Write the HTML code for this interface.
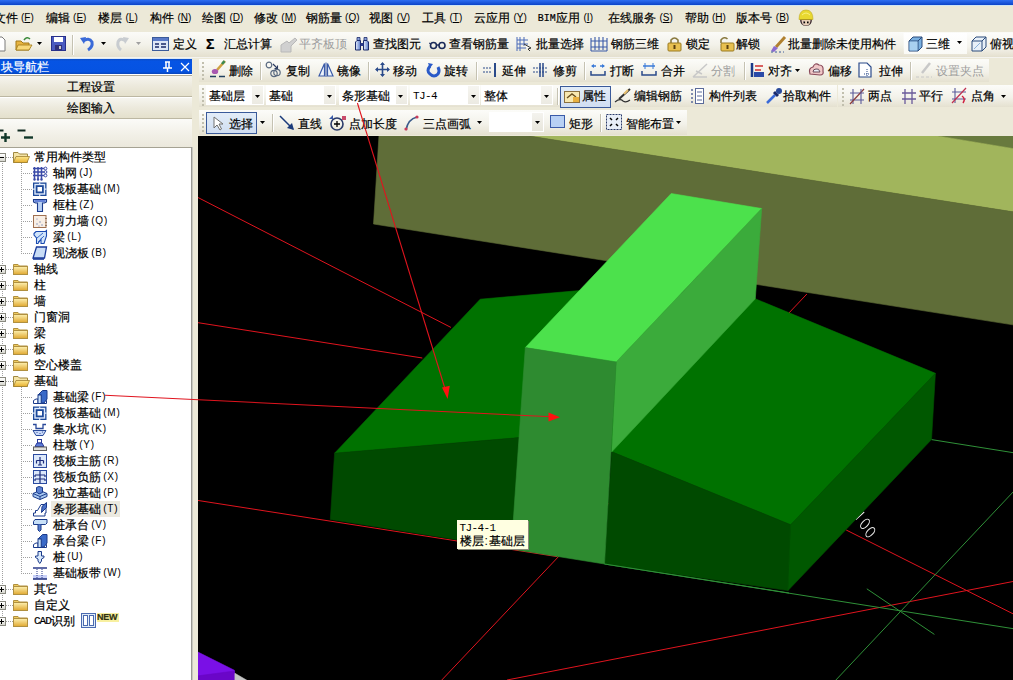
<!DOCTYPE html><html><head><meta charset="utf-8"><style>
html,body{margin:0;padding:0;width:1013px;height:680px;overflow:hidden;background:#ece9d8;}
#root{position:relative;width:1013px;height:680px;overflow:hidden;background:#ece9d8;}
.t{position:absolute;white-space:nowrap;font-family:'Liberation Sans',sans-serif;-webkit-text-stroke:0.2px currentColor;}
.p{-webkit-text-stroke:0 !important;}
.r{position:absolute;}
.m{font-family:'Liberation Mono',monospace;font-size:10px;}
svg{position:absolute;overflow:visible;}
</style></head><body><div id="root">
<div class="r" style="left:0px;top:0px;width:1013px;height:5px;background:linear-gradient(#2f6ff2,#0d44c8);"></div>
<div class="r" style="left:0px;top:5px;width:1013px;height:1px;background:#cfe6f4;"></div>
<div class="t" style="left:-6.5px;top:12px;color:#000;font-size:12px;line-height:12px;">文件</div>
<div class="t p" style="left:21.0px;top:13px;font-size:10px;line-height:10px;">(<u>F</u>)</div>
<div class="t" style="left:45.6px;top:12px;color:#000;font-size:12px;line-height:12px;">编辑</div>
<div class="t p" style="left:73.1px;top:13px;font-size:10px;line-height:10px;">(<u>E</u>)</div>
<div class="t" style="left:98px;top:12px;color:#000;font-size:12px;line-height:12px;">楼层</div>
<div class="t p" style="left:125.5px;top:13px;font-size:10px;line-height:10px;">(<u>L</u>)</div>
<div class="t" style="left:150px;top:12px;color:#000;font-size:12px;line-height:12px;">构件</div>
<div class="t p" style="left:177.5px;top:13px;font-size:10px;line-height:10px;">(<u>N</u>)</div>
<div class="t" style="left:202px;top:12px;color:#000;font-size:12px;line-height:12px;">绘图</div>
<div class="t p" style="left:229.5px;top:13px;font-size:10px;line-height:10px;">(<u>D</u>)</div>
<div class="t" style="left:253.8px;top:12px;color:#000;font-size:12px;line-height:12px;">修改</div>
<div class="t p" style="left:281.3px;top:13px;font-size:10px;line-height:10px;">(<u>M</u>)</div>
<div class="t" style="left:305.6px;top:12px;color:#000;font-size:12px;line-height:12px;">钢筋量</div>
<div class="t p" style="left:345.1px;top:13px;font-size:10px;line-height:10px;">(<u>Q</u>)</div>
<div class="t" style="left:369.3px;top:12px;color:#000;font-size:12px;line-height:12px;">视图</div>
<div class="t p" style="left:396.8px;top:13px;font-size:10px;line-height:10px;">(<u>V</u>)</div>
<div class="t" style="left:422px;top:12px;color:#000;font-size:12px;line-height:12px;">工具</div>
<div class="t p" style="left:449.5px;top:13px;font-size:10px;line-height:10px;">(<u>T</u>)</div>
<div class="t" style="left:474px;top:12px;color:#000;font-size:12px;line-height:12px;">云应用</div>
<div class="t p" style="left:513.5px;top:13px;font-size:10px;line-height:10px;">(<u>Y</u>)</div>
<div class="t" style="left:608px;top:12px;color:#000;font-size:12px;line-height:12px;">在线服务</div>
<div class="t p" style="left:659.5px;top:13px;font-size:10px;line-height:10px;">(<u>S</u>)</div>
<div class="t" style="left:684.5px;top:12px;color:#000;font-size:12px;line-height:12px;">帮助</div>
<div class="t p" style="left:712.0px;top:13px;font-size:10px;line-height:10px;">(<u>H</u>)</div>
<div class="t" style="left:736.3px;top:12px;color:#000;font-size:12px;line-height:12px;">版本号</div>
<div class="t p" style="left:775.8px;top:13px;font-size:10px;line-height:10px;">(<u>B</u>)</div>
<div class="t" style="left:537.7px;top:13px;color:#000;font-size:12px;line-height:12px;font-family:'Liberation Mono',monospace;font-size:10px;line-height:11px;">BIM</div>
<div class="t" style="left:556px;top:12px;color:#000;font-size:12px;line-height:12px;">应用</div>
<div class="t p" style="left:583.5px;top:13px;font-size:10px;line-height:10px;">(<u>I</u>)</div>
<svg style="left:798px;top:9px" width="16" height="18" viewBox="0 0 16 18"><path d="M2 10Q2 17 8 17Q14 17 14 10Z" fill="#3a2a30"/><path d="M3.5 11Q3.5 16.5 8 16.5Q12.5 16.5 12.5 11Z" fill="#e8d0b8"/><path d="M5 11Q7 13 6 16" fill="#a080c0" opacity="0.6"/><rect x="5.5" y="12.5" width="1.6" height="1.8" fill="#000"/><rect x="9" y="12.5" width="1.6" height="1.8" fill="#000"/><path d="M1 10.5Q1 1 8 1Q15 1 15 10.5Z" fill="#e8d830" stroke="#c0a818" stroke-width="0.6"/><path d="M4 6Q8 2 12 6" stroke="#f8f080" fill="none"/></svg>
<div class="r" style="left:0px;top:32px;width:1013px;height:25px;background:linear-gradient(#fbfbf8,#f3f2ea 50%,#e4e0cf);"></div>
<div class="r" style="left:0px;top:57px;width:1013px;height:1px;background:#f4f3ee;"></div>
<svg style="left:-4px;top:36px" width="10" height="16" viewBox="0 0 10 16"><path d="M0 1H6L9 4V15H0Z" fill="#fff" stroke="#7a7a7a"/></svg>
<svg style="left:15px;top:36px" width="18" height="16" viewBox="0 0 18 16"><path d="M1 5H6L8 7H14V14H1Z" fill="#e8b440" stroke="#a07818"/><path d="M3 9H17L14 14H1Z" fill="#f8d878" stroke="#a07818" stroke-width="0.8"/><path d="M9 4Q12 0 15 3" stroke="#3a8a3a" fill="none" stroke-width="1.5"/></svg>
<svg style="left:37px;top:42px" width="6" height="4" viewBox="0 0 6 4"><path d="M0 0H5L2.5 3Z" fill="#000"/></svg>
<svg style="left:51px;top:36px" width="15" height="15" viewBox="0 0 15 15"><rect x="0.5" y="0.5" width="14" height="14" fill="#4a5ac0" stroke="#28308a"/><rect x="3" y="1" width="9" height="5" fill="#fff"/><rect x="4" y="9" width="7" height="5" fill="#30307a"/><rect x="8" y="10" width="2" height="3" fill="#ccc"/></svg>
<div class="r" style="left:72px;top:35px;width:1px;height:20px;background:#c5c2b2;border-right:1px solid #fff;"></div>
<svg style="left:80px;top:36px" width="14" height="15" viewBox="0 0 14 15"><path d="M3 5Q9 1 12 6Q13 11 8 14" stroke="#3a6ad8" stroke-width="3" fill="none"/><path d="M0 2L6 1L4 8Z" fill="#3a6ad8"/></svg>
<svg style="left:101px;top:42px" width="6" height="4" viewBox="0 0 6 4"><path d="M0 0H5L2.5 3Z" fill="#000"/></svg>
<svg style="left:116px;top:36px" width="13" height="15" viewBox="0 0 13 15"><path d="M10 5Q4 1 2 6Q1 11 5 14" stroke="#c8ccd0" stroke-width="3" fill="none"/><path d="M13 2L7 1L9 8Z" fill="#c8ccd0"/></svg>
<svg style="left:136px;top:42px" width="6" height="4" viewBox="0 0 6 4"><path d="M0 0H5L2.5 3Z" fill="#a0a0a0"/></svg>
<svg style="left:152px;top:37px" width="17" height="14" viewBox="0 0 17 14"><rect x="0.5" y="0.5" width="16" height="13" fill="#dde6f6" stroke="#3a5a9a"/><rect x="1" y="1" width="15" height="3" fill="#5a7ac8"/><path d="M3 7H7M3 10H7M9 7H14M9 10H14" stroke="#1a2a6a" stroke-width="1.3"/></svg>
<div class="t" style="left:173px;top:38px;color:#000;font-size:12px;line-height:12px;">定义</div>
<div class="t" style="left:206px;top:38px;color:#000;font-size:12px;line-height:12px;font-size:14px;line-height:12px;"><b>Σ</b></div>
<div class="t" style="left:223.5px;top:38px;color:#000;font-size:12px;line-height:12px;">汇总计算</div>
<svg style="left:279px;top:37px" width="20" height="16" viewBox="0 0 20 16"><path d="M2 15V8L8 4L10 6L16 1L18 3L12 9V15Z" fill="#d0d0d0" stroke="#b8b8b8"/></svg>
<div class="t" style="left:299px;top:38px;color:#9c9c9c;font-size:12px;line-height:12px;-webkit-text-stroke:0;">平齐板顶</div>
<svg style="left:354px;top:36px" width="16" height="15" viewBox="0 0 16 15"><defs><linearGradient id="bn" x1="0" y1="0" x2="1" y2="0"><stop offset="0" stop-color="#e8f0ff"/><stop offset="1" stop-color="#5a7ac8"/></linearGradient></defs><path d="M3 1.5H6V4.5H3Z M10 1.5H13V4.5H10Z" fill="#8aa0d8" stroke="#1a2a6a" stroke-width="0.8"/><path d="M1.5 6L3 4.5H6.5V14H1.5Z" fill="url(#bn)" stroke="#1a2a6a"/><path d="M9.5 4.5H13L14.5 6V14H9.5Z" fill="url(#bn)" stroke="#1a2a6a"/><rect x="6.5" y="7" width="3" height="3" fill="#2a3a8a"/></svg>
<div class="t" style="left:373.4px;top:38px;color:#000;font-size:12px;line-height:12px;">查找图元</div>
<svg style="left:429px;top:40px" width="18" height="10" viewBox="0 0 18 10"><circle cx="4.5" cy="5.5" r="3" fill="none" stroke="#1a2a5a" stroke-width="1.6"/><circle cx="13" cy="5.5" r="3" fill="none" stroke="#1a2a5a" stroke-width="1.6"/><path d="M7.5 5H10" stroke="#1a2a5a" stroke-width="1.4"/><path d="M0 3L2 4" stroke="#1a2a5a"/></svg>
<div class="t" style="left:449px;top:38px;color:#000;font-size:12px;line-height:12px;">查看钢筋量</div>
<svg style="left:516px;top:36px" width="16" height="16" viewBox="0 0 16 16"><path d="M1 1V15M1 4H12M1 8H12M1 12H10M4 1V15M8 1V10" stroke="#4a6ab8" stroke-width="1"/><path d="M8 8L15 12L12 13L14 15" stroke="#303030" fill="#fff"/></svg>
<div class="t" style="left:536px;top:38px;color:#000;font-size:12px;line-height:12px;">批量选择</div>
<svg style="left:590px;top:36px" width="18" height="16" viewBox="0 0 18 16"><path d="M1 2V15M5 1V14M9 1V14M13 1V14M17 2V15M1 5H17M1 11H17M1 15H17" stroke="#3a5aa8" stroke-width="1.1" fill="none"/></svg>
<div class="t" style="left:610.6px;top:38px;color:#000;font-size:12px;line-height:12px;">钢筋三维</div>
<svg style="left:667px;top:36px" width="15" height="16" viewBox="0 0 15 16"><path d="M4 7V4Q7.5 0 11 4V7" stroke="#8a7a40" stroke-width="1.6" fill="none"/><rect x="1" y="7" width="13" height="8" rx="1" fill="#e8c050" stroke="#9a7a20"/><rect x="6.5" y="9" width="2" height="4" fill="#5a4010"/></svg>
<div class="t" style="left:685.7px;top:38px;color:#000;font-size:12px;line-height:12px;">锁定</div>
<svg style="left:719px;top:36px" width="16" height="16" viewBox="0 0 16 16"><path d="M2 7V4Q5 0 8.5 3" stroke="#8a7a40" stroke-width="1.6" fill="none"/><rect x="2" y="7" width="13" height="8" rx="1" fill="#e8c050" stroke="#9a7a20"/><rect x="7.5" y="9" width="2" height="4" fill="#5a4010"/></svg>
<div class="t" style="left:736px;top:38px;color:#000;font-size:12px;line-height:12px;">解锁</div>
<svg style="left:770px;top:36px" width="16" height="17" viewBox="0 0 16 17"><path d="M15 1L6 11" stroke="#b08030" stroke-width="3"/><path d="M4 10L8 12L4 16L1 15Z" fill="#8a6ad0"/><path d="M1 16H14" stroke="#3a5a9a" stroke-dasharray="2 2"/></svg>
<div class="t" style="left:787.5px;top:38px;color:#000;font-size:12px;line-height:12px;">批量删除未使用构件</div>
<div class="r" style="left:903px;top:33px;width:110px;height:23px;background:linear-gradient(#fdfdfb,#f4f3ec 60%,#e6e2d2);"></div>
<div class="r" style="left:904px;top:33px;width:63px;height:21px;background:linear-gradient(#ffffff,#fafaf6);"></div>
<svg style="left:908px;top:36px" width="15" height="16" viewBox="0 0 15 16"><path d="M1 5L5 1H14V11L10 15H1Z" fill="#7ab0e0" stroke="#2a4a7a"/><path d="M1 5H10V15M10 5L14 1" stroke="#2a4a7a" fill="none"/><rect x="1.5" y="5.5" width="8" height="9" fill="#a8d0f0"/></svg>
<div class="t" style="left:925.5px;top:38px;color:#000;font-size:12px;line-height:12px;">三维</div>
<svg style="left:957px;top:41px" width="6" height="4" viewBox="0 0 6 4"><path d="M0 0H5L2.5 3Z" fill="#000"/></svg>
<svg style="left:971px;top:36px" width="16" height="16" viewBox="0 0 16 16"><path d="M1 5L5 1H15V11L11 15H1Z" fill="#e8f0f8" stroke="#2a4a7a"/><path d="M1 5H11V15M11 5L15 1" stroke="#2a4a7a" fill="none"/><path d="M3 13L9 7" stroke="#8ab0d8"/></svg>
<div class="t" style="left:990px;top:38px;color:#000;font-size:12px;line-height:12px;">俯视</div>
<div class="r" style="left:199px;top:59px;width:790px;height:23px;background:linear-gradient(#fcfcf9,#f3f2ea 55%,#e5e1d0);"></div>
<div class="r" style="left:199px;top:85px;width:638px;height:22px;background:linear-gradient(#fcfcf9,#f3f2ea 55%,#e5e1d0);"></div>
<div class="r" style="left:838px;top:85px;width:175px;height:22px;background:linear-gradient(#fcfcf9,#f3f2ea 55%,#e5e1d0);"></div>
<div class="r" style="left:199px;top:110px;width:488px;height:25px;background:linear-gradient(#fcfcf9,#f3f2ea 55%,#e5e1d0);"></div>
<div class="r" style="left:202px;top:62px;width:2px;height:2px;background:#c1bfae;"></div>
<div class="r" style="left:202px;top:66px;width:2px;height:2px;background:#c1bfae;"></div>
<div class="r" style="left:202px;top:70px;width:2px;height:2px;background:#c1bfae;"></div>
<div class="r" style="left:202px;top:74px;width:2px;height:2px;background:#c1bfae;"></div>
<div class="r" style="left:202px;top:78px;width:2px;height:2px;background:#c1bfae;"></div>
<div class="r" style="left:202px;top:88px;width:2px;height:2px;background:#c1bfae;"></div>
<div class="r" style="left:202px;top:92px;width:2px;height:2px;background:#c1bfae;"></div>
<div class="r" style="left:202px;top:96px;width:2px;height:2px;background:#c1bfae;"></div>
<div class="r" style="left:202px;top:100px;width:2px;height:2px;background:#c1bfae;"></div>
<div class="r" style="left:202px;top:104px;width:2px;height:2px;background:#c1bfae;"></div>
<div class="r" style="left:202px;top:114px;width:2px;height:2px;background:#c1bfae;"></div>
<div class="r" style="left:202px;top:118px;width:2px;height:2px;background:#c1bfae;"></div>
<div class="r" style="left:202px;top:122px;width:2px;height:2px;background:#c1bfae;"></div>
<div class="r" style="left:202px;top:126px;width:2px;height:2px;background:#c1bfae;"></div>
<div class="r" style="left:202px;top:130px;width:2px;height:2px;background:#c1bfae;"></div>
<div class="r" style="left:842px;top:88px;width:2px;height:2px;background:#c1bfae;"></div>
<div class="r" style="left:842px;top:92px;width:2px;height:2px;background:#c1bfae;"></div>
<div class="r" style="left:842px;top:96px;width:2px;height:2px;background:#c1bfae;"></div>
<div class="r" style="left:842px;top:100px;width:2px;height:2px;background:#c1bfae;"></div>
<div class="r" style="left:842px;top:104px;width:2px;height:2px;background:#c1bfae;"></div>
<svg style="left:209px;top:60px" width="17" height="18" viewBox="0 0 17 18"><path d="M16 1L8 10" stroke="#d0a040" stroke-width="2.6"/><path d="M15.5 1.2L13 4" stroke="#3a8a50" stroke-width="2.6"/><ellipse cx="6" cy="11.5" rx="3.2" ry="2.6" fill="#a858b0"/><path d="M1 16.5H7M10 16.5H16" stroke="#204060" stroke-width="1.6"/></svg>
<div class="t" style="left:228.8px;top:65px;color:#000;font-size:12px;line-height:12px;">删除</div>
<div class="r" style="left:260px;top:62px;width:1px;height:18px;background:#c5c2b2;border-right:1px solid #fff;"></div>
<svg style="left:265px;top:61px" width="18" height="17" viewBox="0 0 18 17"><circle cx="4" cy="4" r="2.8" fill="none" stroke="#5a6a80" stroke-width="1.2"/><path d="M8 3L12.5 7.5M12.5 4.5V7.5H9.5" stroke="#2a3a60" fill="none" stroke-width="1.1"/><circle cx="9" cy="12.5" r="3.2" fill="none" stroke="#5a6a80" stroke-width="1.2"/><circle cx="12" cy="11.5" r="3.2" fill="none" stroke="#5a6a80" stroke-width="1.2"/></svg>
<div class="t" style="left:285.6px;top:65px;color:#000;font-size:12px;line-height:12px;">复制</div>
<svg style="left:318px;top:62px" width="16" height="15" viewBox="0 0 16 15"><path d="M1 14L6.5 1.5V14Z" fill="#eef4fc" stroke="#3a5aa8" stroke-width="1.2"/><path d="M15 14L9.5 1.5V14Z" fill="#eef4fc" stroke="#3a5aa8" stroke-width="1.2"/><path d="M8 0.5V15" stroke="#3a5aa8"/></svg>
<div class="t" style="left:337px;top:65px;color:#000;font-size:12px;line-height:12px;">镜像</div>
<div class="r" style="left:368px;top:62px;width:1px;height:18px;background:#c5c2b2;border-right:1px solid #fff;"></div>
<svg style="left:375px;top:62px" width="15" height="15" viewBox="0 0 15 15"><path d="M7.5 1V14M1 7.5H14" stroke="#2a4a8a" stroke-width="1.6"/><path d="M7.5 0L5 3H10ZM7.5 15L5 12H10ZM0 7.5L3 5V10ZM15 7.5L12 5V10Z" fill="#2a4a8a"/></svg>
<div class="t" style="left:393px;top:65px;color:#000;font-size:12px;line-height:12px;">移动</div>
<svg style="left:427px;top:62px" width="13" height="15" viewBox="0 0 13 15"><path d="M3 4Q-1 9 3 12Q7 16 11 12Q13 9 11 5" stroke="#2a5ac8" stroke-width="3" fill="none"/><path d="M1 1L6 2L3 6Z" fill="#2a5ac8"/></svg>
<div class="t" style="left:444px;top:65px;color:#000;font-size:12px;line-height:12px;">旋转</div>
<div class="r" style="left:476px;top:62px;width:1px;height:18px;background:#c5c2b2;border-right:1px solid #fff;"></div>
<svg style="left:483px;top:63px" width="14" height="14" viewBox="0 0 14 14"><path d="M12 0V14" stroke="#2a4a8a" stroke-width="2"/><path d="M0 5H9M0 9H9" stroke="#2a4a8a" stroke-dasharray="2 1"/></svg>
<div class="t" style="left:501.5px;top:65px;color:#000;font-size:12px;line-height:12px;">延伸</div>
<svg style="left:533px;top:63px" width="15" height="14" viewBox="0 0 15 14"><path d="M7 0V14M10 0V14" stroke="#2a4a8a" stroke-width="1.5"/><path d="M0 5H15M0 9H15" stroke="#2a4a8a" stroke-dasharray="2 1"/></svg>
<div class="t" style="left:553px;top:65px;color:#000;font-size:12px;line-height:12px;">修剪</div>
<div class="r" style="left:584px;top:62px;width:1px;height:18px;background:#c5c2b2;border-right:1px solid #fff;"></div>
<svg style="left:590px;top:62px" width="16" height="15" viewBox="0 0 16 15"><path d="M1 9V13H15V9" stroke="#2a4a8a" stroke-width="1.5" fill="none"/><path d="M2 4H6M10 4H14" stroke="#3a7ad8" stroke-width="1.5"/><path d="M1 4L4 2V6ZM15 4L12 2V6Z" fill="#3a7ad8"/></svg>
<div class="t" style="left:609.7px;top:65px;color:#000;font-size:12px;line-height:12px;">打断</div>
<svg style="left:641px;top:62px" width="16" height="15" viewBox="0 0 16 15"><path d="M1 9V13H15V9" stroke="#2a4a8a" stroke-width="1.5" fill="none"/><path d="M2 4H14" stroke="#3a7ad8" stroke-width="1.5"/><path d="M4 1V7M12 1V7" stroke="#3a7ad8"/></svg>
<div class="t" style="left:661px;top:65px;color:#000;font-size:12px;line-height:12px;">合并</div>
<svg style="left:692px;top:62px" width="16" height="16" viewBox="0 0 16 16"><path d="M1 15L15 2M1 15H15M4 9L10 12" stroke="#c8c8c8" stroke-width="1.5"/></svg>
<div class="t" style="left:710.5px;top:65px;color:#9c9c9c;font-size:12px;line-height:12px;-webkit-text-stroke:0;">分割</div>
<div class="r" style="left:744px;top:62px;width:1px;height:18px;background:#c5c2b2;border-right:1px solid #fff;"></div>
<svg style="left:750px;top:62px" width="15" height="16" viewBox="0 0 15 16"><path d="M2 1V15" stroke="#1a3a8a" stroke-width="2.5"/><path d="M5 4H13M5 8H11M5 12H14" stroke="#d03030" stroke-width="1.4"/><rect x="4" y="10" width="10" height="5" fill="#2a4aa8"/></svg>
<div class="t" style="left:768.3px;top:65px;color:#000;font-size:12px;line-height:12px;">对齐</div>
<svg style="left:795px;top:69px" width="6" height="4" viewBox="0 0 6 4"><path d="M0 0H5L2.5 3Z" fill="#000"/></svg>
<svg style="left:808px;top:62px" width="17" height="15" viewBox="0 0 17 15"><path d="M2 12Q0 6 5 5Q7 0 11 3Q16 3 15 9Q16 13 12 13Z" fill="#f0c8c8" stroke="#8a4a5a" stroke-width="1.2"/><path d="M5 10Q5 7 8 7Q11 6 12 10Z" fill="#e8f0f8" stroke="#6a4a5a"/></svg>
<div class="t" style="left:827.6px;top:65px;color:#000;font-size:12px;line-height:12px;">偏移</div>
<svg style="left:858px;top:62px" width="15" height="16" viewBox="0 0 15 16"><path d="M1 1H9L13 5V15H1Z" fill="#fff" stroke="#2a4a8a" stroke-width="1.2"/><path d="M9 7V14M6 12H12" stroke="#2a4a8a" stroke-dasharray="1 1"/></svg>
<div class="t" style="left:878.8px;top:65px;color:#000;font-size:12px;line-height:12px;">拉伸</div>
<div class="r" style="left:910px;top:62px;width:1px;height:18px;background:#c5c2b2;border-right:1px solid #fff;"></div>
<svg style="left:915px;top:62px" width="18" height="16" viewBox="0 0 18 16"><path d="M15 1L7 11" stroke="#c8c8c8" stroke-width="2.5"/><path d="M1 15H17" stroke="#c8c8c8" stroke-dasharray="3 2"/></svg>
<div class="t" style="left:936px;top:65px;color:#9c9c9c;font-size:12px;line-height:12px;-webkit-text-stroke:0;">设置夹点</div>
<div class="r" style="left:206px;top:85px;width:58px;height:20px;background:#fff;"></div>
<div class="r" style="left:252px;top:86px;width:11px;height:18px;background:linear-gradient(#f6f5f0,#eceae2);"></div>
<svg style="left:254.5px;top:94.5px" width="6" height="4" viewBox="0 0 6 4"><path d="M0 0H5L2.5 3Z" fill="#000"/></svg>
<div class="t" style="left:209px;top:90px;color:#000;font-size:12px;line-height:12px;">基础层</div>
<div class="r" style="left:266px;top:85px;width:70px;height:20px;background:#fff;"></div>
<div class="r" style="left:324px;top:86px;width:11px;height:18px;background:linear-gradient(#f6f5f0,#eceae2);"></div>
<svg style="left:326.5px;top:94.5px" width="6" height="4" viewBox="0 0 6 4"><path d="M0 0H5L2.5 3Z" fill="#000"/></svg>
<div class="t" style="left:269px;top:90px;color:#000;font-size:12px;line-height:12px;">基础</div>
<div class="r" style="left:338.5px;top:85px;width:69px;height:20px;background:#fff;"></div>
<div class="r" style="left:395.5px;top:86px;width:11px;height:18px;background:linear-gradient(#f6f5f0,#eceae2);"></div>
<svg style="left:398.0px;top:94.5px" width="6" height="4" viewBox="0 0 6 4"><path d="M0 0H5L2.5 3Z" fill="#000"/></svg>
<div class="t" style="left:341.5px;top:90px;color:#000;font-size:12px;line-height:12px;">条形基础</div>
<div class="r" style="left:410px;top:85px;width:70px;height:20px;background:#fff;"></div>
<div class="r" style="left:468px;top:86px;width:11px;height:18px;background:linear-gradient(#f6f5f0,#eceae2);"></div>
<svg style="left:470.5px;top:94.5px" width="6" height="4" viewBox="0 0 6 4"><path d="M0 0H5L2.5 3Z" fill="#000"/></svg>
<div class="t p" style="left:413px;top:90px;font-family:'Liberation Mono',monospace;font-size:11px;line-height:12px;letter-spacing:-0.6px;">TJ-4</div>
<div class="r" style="left:481px;top:85px;width:72px;height:20px;background:#fff;"></div>
<div class="r" style="left:541px;top:86px;width:11px;height:18px;background:linear-gradient(#f6f5f0,#eceae2);"></div>
<svg style="left:543.5px;top:94.5px" width="6" height="4" viewBox="0 0 6 4"><path d="M0 0H5L2.5 3Z" fill="#000"/></svg>
<div class="t" style="left:484px;top:90px;color:#000;font-size:12px;line-height:12px;">整体</div>
<div class="r" style="left:557px;top:88px;width:1px;height:17px;background:#c5c2b2;border-right:1px solid #fff;"></div>
<div class="r" style="left:560px;top:86px;width:51px;height:22px;background:linear-gradient(#e2ecf8,#d0def2);border:1px solid #3a5a9a;box-sizing:border-box;"></div>
<svg style="left:564px;top:89px" width="17" height="15" viewBox="0 0 17 15"><rect x="0.5" y="2.5" width="15" height="11" fill="#f8e8b0" stroke="#8a7040"/><path d="M3 9L8 5L12 8" stroke="#6a5020" fill="none" stroke-width="1.4"/><rect x="9" y="8" width="6" height="5" fill="#e8b040"/></svg>
<div class="t" style="left:582.2px;top:90px;color:#000;font-size:12px;line-height:12px;">属性</div>
<svg style="left:614px;top:88px" width="17" height="16" viewBox="0 0 17 16"><path d="M16 1L5 11" stroke="#303030" stroke-width="2"/><path d="M14 2L10 6" stroke="#e8c070" stroke-width="2"/><path d="M1 14Q6 10 9 13Q12 15 16 12" stroke="#303030" fill="none" stroke-width="1.2"/></svg>
<div class="t" style="left:633.8px;top:90px;color:#000;font-size:12px;line-height:12px;">编辑钢筋</div>
<svg style="left:690px;top:88px" width="14" height="16" viewBox="0 0 14 16"><path d="M1 2H3M1 6H3M1 10H3M1 14H3" stroke="#5a6a9a" stroke-width="1.5"/><rect x="5.5" y="0.5" width="8" height="15" fill="#fff" stroke="#5a6a9a"/><path d="M7 4H12M7 8H12M7 12H12" stroke="#5a6a9a"/></svg>
<div class="t" style="left:709px;top:90px;color:#000;font-size:12px;line-height:12px;">构件列表</div>
<svg style="left:765px;top:87px" width="18" height="18" viewBox="0 0 18 18"><path d="M2 16L10 8" stroke="#3a6ad8" stroke-width="2.5"/><path d="M9 5L13 9" stroke="#1a2a6a" stroke-width="3"/><circle cx="14" cy="4" r="3" fill="#2a4a9a"/></svg>
<div class="t" style="left:783px;top:90px;color:#000;font-size:12px;line-height:12px;">拾取构件</div>
<svg style="left:849px;top:88px" width="16" height="17" viewBox="0 0 16 17"><path d="M4 1V16M1 5H15M1 12H15" stroke="#5a5a9a" stroke-width="1.1"/><path d="M1 16L15 1" stroke="#8a3a3a" stroke-width="1.2"/><path d="M12 1V16" stroke="#5a5a9a" stroke-width="1.1"/></svg>
<div class="t" style="left:868px;top:90px;color:#000;font-size:12px;line-height:12px;">两点</div>
<svg style="left:901px;top:88px" width="15" height="16" viewBox="0 0 15 16"><path d="M4 1V16M11 1V16M1 5H15M1 11H15" stroke="#6a5a9a" stroke-width="1.3"/></svg>
<div class="t" style="left:919px;top:90px;color:#000;font-size:12px;line-height:12px;">平行</div>
<svg style="left:951px;top:87px" width="17" height="18" viewBox="0 0 17 18"><path d="M4 1V16M1 5H15M1 12H15" stroke="#5a5a9a" stroke-width="1.1"/><path d="M1 16L15 1" stroke="#c03050" stroke-width="1.2"/><path d="M11 9Q15 12 12 16" stroke="#d02040" fill="none" stroke-width="1.5"/></svg>
<div class="t" style="left:970.5px;top:90px;color:#000;font-size:12px;line-height:12px;">点角</div>
<svg style="left:1001px;top:95px" width="6" height="4" viewBox="0 0 6 4"><path d="M0 0H5L2.5 3Z" fill="#000"/></svg>
<div class="r" style="left:206px;top:112px;width:51px;height:22px;background:linear-gradient(#e2ecf8,#d0def2);border:1px solid #3a5a9a;box-sizing:border-box;"></div>
<svg style="left:213px;top:116px" width="11" height="15" viewBox="0 0 11 15"><path d="M1 1V12L4 9L7 14L8.5 13L6 8H10Z" fill="#fff" stroke="#707070"/></svg>
<div class="t" style="left:228.8px;top:118px;color:#000;font-size:12px;line-height:12px;">选择</div>
<svg style="left:259.5px;top:121px" width="6" height="4" viewBox="0 0 6 4"><path d="M0 0H5L2.5 3Z" fill="#000"/></svg>
<div class="r" style="left:272px;top:114px;width:1px;height:18px;background:#c5c2b2;border-right:1px solid #fff;"></div>
<svg style="left:279px;top:115px" width="16" height="16" viewBox="0 0 16 16"><path d="M1 1L14 14" stroke="#1a3a7a" stroke-width="1.5"/><path d="M15 15L8 13L13 8Z" fill="#1a3a7a"/></svg>
<div class="t" style="left:297.7px;top:118px;color:#000;font-size:12px;line-height:12px;">直线</div>
<svg style="left:328px;top:114px" width="19" height="18" viewBox="0 0 19 18"><circle cx="9" cy="10" r="6" fill="none" stroke="#2a3a6a" stroke-width="1.6"/><path d="M6 10H12M9 7V13" stroke="#000" stroke-width="1.3"/><path d="M1 5L5 1V5Z" fill="#3a5aa8"/><rect x="14" y="2" width="4" height="4" fill="#c84a6a"/></svg>
<div class="t" style="left:349px;top:118px;color:#000;font-size:12px;line-height:12px;">点加长度</div>
<svg style="left:404px;top:115px" width="15" height="16" viewBox="0 0 15 16"><path d="M2 15Q4 4 13 2" stroke="#3a5a8a" stroke-width="1.6" fill="none"/><circle cx="2" cy="14" r="1.6" fill="#c83a5a"/><circle cx="13" cy="2" r="1.6" fill="#c83a5a"/></svg>
<div class="t" style="left:422.8px;top:118px;color:#000;font-size:12px;line-height:12px;">三点画弧</div>
<svg style="left:476.5px;top:121px" width="6" height="4" viewBox="0 0 6 4"><path d="M0 0H5L2.5 3Z" fill="#000"/></svg>
<div class="r" style="left:489px;top:112px;width:55px;height:20px;background:#fff;"></div>
<div class="r" style="left:532px;top:113px;width:11px;height:18px;background:linear-gradient(#f4f3ee,#e8e6dc);"></div>
<svg style="left:535px;top:121px" width="6" height="4" viewBox="0 0 6 4"><path d="M0 0H5L2.5 3Z" fill="#000"/></svg>
<svg style="left:550px;top:115px" width="15" height="13" viewBox="0 0 15 13"><rect x="0.5" y="0.5" width="14" height="12" fill="#b8d0f4" stroke="#3a5aa8"/></svg>
<div class="t" style="left:568.9px;top:118px;color:#000;font-size:12px;line-height:12px;">矩形</div>
<div class="r" style="left:600px;top:114px;width:1px;height:18px;background:#c5c2b2;border-right:1px solid #fff;"></div>
<svg style="left:606px;top:114px" width="16" height="16" viewBox="0 0 16 16"><rect x="0.5" y="0.5" width="15" height="15" fill="#e8eef8" stroke="#2a3a6a" stroke-dasharray="2 1"/><path d="M4 4L6 6M12 4L10 6M4 12L6 10M12 12L10 10" stroke="#000" stroke-width="1.5"/></svg>
<div class="t" style="left:625.7px;top:118px;color:#000;font-size:12px;line-height:12px;">智能布置</div>
<svg style="left:675.6px;top:121px" width="6" height="4" viewBox="0 0 6 4"><path d="M0 0H5L2.5 3Z" fill="#000"/></svg>
<div class="r" style="left:0px;top:58px;width:194px;height:1px;background:#dbe8f4;"></div>
<div class="r" style="left:0px;top:59px;width:194px;height:15px;background:linear-gradient(#0a4cc8,#0654e4 15%,#0553e2 85%,#0844b8);"></div>
<div class="t" style="left:1px;top:61px;color:#fff;font-size:12px;line-height:12px;line-height:12px;">块导航栏</div>
<svg style="left:162px;top:61px" width="11" height="12" viewBox="0 0 11 12"><path d="M3 1H8M4 1V7M7 1V7M1 7H10M5.5 7V11" stroke="#fff" stroke-width="1.5" fill="none"/></svg>
<svg style="left:180px;top:62px" width="10" height="10" viewBox="0 0 10 10"><path d="M1 1L9 9M9 1L1 9" stroke="#fff" stroke-width="1.2"/></svg>
<div class="r" style="left:0px;top:74px;width:193px;height:1px;background:#fff;"></div>
<div class="r" style="left:0px;top:75px;width:193px;height:1px;background:#b0aa98;"></div>
<div class="r" style="left:0px;top:76px;width:192px;height:21px;background:linear-gradient(#f6f5ef,#ece9dc 50%,#e4e0cc);border-bottom:1px solid #bcb7a2;box-sizing:border-box;"></div>
<div class="r" style="left:0px;top:97px;width:192px;height:22px;background:linear-gradient(#f6f5ef,#ece9dc 50%,#e4e0cc);border-top:1px solid #fff;border-bottom:1px solid #bcb7a2;box-sizing:border-box;"></div>
<div class="t" style="left:67px;top:81px;color:#000;font-size:12px;line-height:12px;">工程设置</div>
<div class="t" style="left:67px;top:102px;color:#000;font-size:12px;line-height:12px;">绘图输入</div>
<div class="r" style="left:192px;top:76px;width:1px;height:43px;background:#cdc8b4;"></div>
<div class="r" style="left:0px;top:119px;width:192px;height:28px;background:linear-gradient(#fbfbf8,#f1efe6 60%,#ebe8dc);"></div>
<svg style="left:0;top:126px" width="40" height="18" viewBox="0 126 40 18"><path d="M-1 130.5H3.5" stroke="#102a20" stroke-width="2"/><path d="M1 137.5H10M5.5 133V142" stroke="#12382a" stroke-width="2.4"/><path d="M17.5 130.5H25.5" stroke="#102a20" stroke-width="2"/><path d="M24 137.5H33" stroke="#12382a" stroke-width="2.4"/></svg>
<div class="r" style="left:0px;top:147px;width:192px;height:533px;background:#fff;border-top:1px solid #a5a293;border-right:1px solid #a5a293;box-sizing:border-box;"></div>
<div class="r" style="left:192px;top:58px;width:6px;height:622px;background:#ece9d8;"></div>
<div class="r" style="left:191px;top:147px;width:1px;height:533px;background:#9a9a94;"></div>
<div class="r" style="left:192px;top:147px;width:1px;height:533px;background:#c9c8c0;"></div>
<svg style="left:0;top:0" width="0" height="0"><defs><linearGradient id="fg" x1="0" y1="0" x2="0" y2="1"><stop offset="0" stop-color="#fdf0b0"/><stop offset="1" stop-color="#e0a830"/></linearGradient><linearGradient id="fo" x1="0" y1="0" x2="0" y2="1"><stop offset="0" stop-color="#fce890"/><stop offset="1" stop-color="#e8b030"/></linearGradient></defs></svg>
<svg style="left:2px;top:157px" width="1" height="464"><line x1="0.5" y1="0" x2="0.5" y2="464" stroke="#a0a0a0" stroke-dasharray="1 1"/></svg>
<div class="r" style="left:-3px;top:153px;width:9px;height:9px;background:linear-gradient(#fff,#d8d8d0);border:1px solid #8a8a80;box-sizing:border-box;"></div>
<div class="r" style="left:-1px;top:157px;width:5px;height:1px;background:#000;"></div>
<svg style="left:6px;top:157px" width="7" height="1"><line x1="0" y1="0.5" x2="7" y2="0.5" stroke="#a0a0a0" stroke-dasharray="1 1"/></svg>
<svg style="left:13px;top:151px" width="17" height="12" viewBox="0 0 17 12"><path d="M0.5 1.5H5L6.5 3H14.5V11.5H0.5Z" fill="#f4e4a8" stroke="#a08840"/><path d="M3 5.5H16.5L14 11.5H0.5Z" fill="url(#fo)" stroke="#a08030" stroke-width="0.8"/></svg>
<div class="t" style="left:34.4px;top:151px;color:#000;font-size:12px;line-height:12px;">常用构件类型</div>
<svg style="left:21px;top:163px" width="1" height="90"><line x1="0.5" y1="0" x2="0.5" y2="90" stroke="#a0a0a0" stroke-dasharray="1 1"/></svg>
<svg style="left:21px;top:173px" width="11" height="1"><line x1="0" y1="0.5" x2="11" y2="0.5" stroke="#a0a0a0" stroke-dasharray="1 1"/></svg>
<svg style="left:32px;top:166px" width="16" height="16" viewBox="0 0 16 16"><path d="M2.5 1V13M6 1V13M9.5 1V13M1 2.5H12M1 6H12M1 9.5H12" stroke="#3a4aa8" stroke-width="1.5"/><circle cx="13.5" cy="2.5" r="1.4" fill="#fff" stroke="#3a4aa8"/><circle cx="13.5" cy="6" r="1.4" fill="#fff" stroke="#3a4aa8"/><circle cx="13.5" cy="9.5" r="1.4" fill="#fff" stroke="#3a4aa8"/><circle cx="2.5" cy="13.5" r="1.2" fill="#3a4aa8"/><circle cx="6" cy="13.5" r="1.2" fill="#3a4aa8"/><circle cx="9.5" cy="13.5" r="1.2" fill="#3a4aa8"/></svg>
<div class="t" style="left:52.7px;top:167px;color:#000;font-size:12px;line-height:12px;">轴网</div>
<div class="t p" style="left:79.2px;top:168px;font-size:10px;line-height:10px;letter-spacing:0.8px;">(J)</div>
<svg style="left:21px;top:189px" width="11" height="1"><line x1="0" y1="0.5" x2="11" y2="0.5" stroke="#a0a0a0" stroke-dasharray="1 1"/></svg>
<svg style="left:32px;top:182px" width="16" height="16" viewBox="0 0 16 16"><rect x="1" y="0.5" width="13.5" height="13.5" fill="#1e4a9a"/><rect x="3" y="2.5" width="9.5" height="9.5" fill="none" stroke="#e0ecfc" stroke-width="1.4"/><rect x="5.5" y="5" width="4.5" height="4.5" fill="#fff"/><path d="M1 7.2H3M12.5 7.2H14.5M7.7 0.5V2.5M7.7 12V14" stroke="#e0ecfc" stroke-width="1.2"/></svg>
<div class="t" style="left:52.7px;top:183px;color:#000;font-size:12px;line-height:12px;">筏板基础</div>
<div class="t p" style="left:103.2px;top:184px;font-size:10px;line-height:10px;letter-spacing:0.8px;">(M)</div>
<svg style="left:21px;top:205px" width="11" height="1"><line x1="0" y1="0.5" x2="11" y2="0.5" stroke="#a0a0a0" stroke-dasharray="1 1"/></svg>
<svg style="left:32px;top:198px" width="16" height="16" viewBox="0 0 16 16"><path d="M1.5 1.5H14.5V4L12.5 5H10.5V13.5H5.5V5H3.5L1.5 4Z" fill="#b8d0f4" stroke="#1a3a8a" stroke-width="1.1"/><path d="M2.5 3H13.5" stroke="#4a6ad0" stroke-width="1.5"/></svg>
<div class="t" style="left:52.7px;top:199px;color:#000;font-size:12px;line-height:12px;">框柱</div>
<div class="t p" style="left:79.2px;top:200px;font-size:10px;line-height:10px;letter-spacing:0.8px;">(Z)</div>
<svg style="left:21px;top:221px" width="11" height="1"><line x1="0" y1="0.5" x2="11" y2="0.5" stroke="#a0a0a0" stroke-dasharray="1 1"/></svg>
<svg style="left:32px;top:214px" width="16" height="16" viewBox="0 0 16 16"><rect x="1.5" y="1.5" width="12.5" height="12" fill="#f8eee4" stroke="#a07050"/><path d="M14 4V5M14 8V9M14 11V12" stroke="#806040" stroke-width="1.5"/><circle cx="5" cy="5" r="0.6" fill="#7080b0"/><circle cx="8" cy="8" r="0.7" fill="#7080b0"/><circle cx="5" cy="10" r="0.7" fill="#7080b0"/><circle cx="10" cy="11" r="0.7" fill="#7080b0"/><circle cx="7" cy="12" r="0.6" fill="#7080b0"/></svg>
<div class="t" style="left:52.7px;top:215px;color:#000;font-size:12px;line-height:12px;">剪力墙</div>
<div class="t p" style="left:91.2px;top:216px;font-size:10px;line-height:10px;letter-spacing:0.8px;">(Q)</div>
<svg style="left:21px;top:237px" width="11" height="1"><line x1="0" y1="0.5" x2="11" y2="0.5" stroke="#a0a0a0" stroke-dasharray="1 1"/></svg>
<svg style="left:32px;top:230px" width="16" height="16" viewBox="0 0 16 16"><path d="M2 3.5L4 1.5H13.5L14.5 0.5V6L12 13.5H9L9 9L6 13.5H4.5V8L2 5Z" fill="#d0e4fa" stroke="#1a4ab0" stroke-width="1.1"/><path d="M5 8L11 3M6 12L12 6" stroke="#3a6ac8" stroke-width="1"/></svg>
<div class="t" style="left:52.7px;top:231px;color:#000;font-size:12px;line-height:12px;">梁</div>
<div class="t p" style="left:67.2px;top:232px;font-size:10px;line-height:10px;letter-spacing:0.8px;">(L)</div>
<svg style="left:21px;top:253px" width="11" height="1"><line x1="0" y1="0.5" x2="11" y2="0.5" stroke="#a0a0a0" stroke-dasharray="1 1"/></svg>
<svg style="left:32px;top:246px" width="16" height="16" viewBox="0 0 16 16"><path d="M4.5 1H14.5L12.5 12H1Z" fill="#c8dcf6" stroke="#1a3a9a" stroke-width="1.3"/><path d="M1 13H12" stroke="#1a3a9a" stroke-width="1.6"/></svg>
<div class="t" style="left:52.7px;top:247px;color:#000;font-size:12px;line-height:12px;">现浇板</div>
<div class="t p" style="left:91.2px;top:248px;font-size:10px;line-height:10px;letter-spacing:0.8px;">(B)</div>
<div class="r" style="left:-3px;top:265px;width:9px;height:9px;background:linear-gradient(#fff,#d8d8d0);border:1px solid #8a8a80;box-sizing:border-box;"></div>
<div class="r" style="left:-1px;top:269px;width:5px;height:1px;background:#000;"></div>
<div class="r" style="left:1px;top:267px;width:1px;height:5px;background:#000;"></div>
<svg style="left:6px;top:269px" width="7" height="1"><line x1="0" y1="0.5" x2="7" y2="0.5" stroke="#a0a0a0" stroke-dasharray="1 1"/></svg>
<svg style="left:13px;top:263px" width="16" height="12" viewBox="0 0 16 12"><path d="M0.5 1.5H5L6.5 3H14.5V11.5H0.5Z" fill="#f0cc60" stroke="#b09040"/><rect x="0.5" y="3.5" width="14" height="8" fill="url(#fg)" stroke="#b09040"/></svg>
<div class="t" style="left:34.4px;top:263px;color:#000;font-size:12px;line-height:12px;">轴线</div>
<div class="r" style="left:-3px;top:281px;width:9px;height:9px;background:linear-gradient(#fff,#d8d8d0);border:1px solid #8a8a80;box-sizing:border-box;"></div>
<div class="r" style="left:-1px;top:285px;width:5px;height:1px;background:#000;"></div>
<div class="r" style="left:1px;top:283px;width:1px;height:5px;background:#000;"></div>
<svg style="left:6px;top:285px" width="7" height="1"><line x1="0" y1="0.5" x2="7" y2="0.5" stroke="#a0a0a0" stroke-dasharray="1 1"/></svg>
<svg style="left:13px;top:279px" width="16" height="12" viewBox="0 0 16 12"><path d="M0.5 1.5H5L6.5 3H14.5V11.5H0.5Z" fill="#f0cc60" stroke="#b09040"/><rect x="0.5" y="3.5" width="14" height="8" fill="url(#fg)" stroke="#b09040"/></svg>
<div class="t" style="left:34.4px;top:279px;color:#000;font-size:12px;line-height:12px;">柱</div>
<div class="r" style="left:-3px;top:297px;width:9px;height:9px;background:linear-gradient(#fff,#d8d8d0);border:1px solid #8a8a80;box-sizing:border-box;"></div>
<div class="r" style="left:-1px;top:301px;width:5px;height:1px;background:#000;"></div>
<div class="r" style="left:1px;top:299px;width:1px;height:5px;background:#000;"></div>
<svg style="left:6px;top:301px" width="7" height="1"><line x1="0" y1="0.5" x2="7" y2="0.5" stroke="#a0a0a0" stroke-dasharray="1 1"/></svg>
<svg style="left:13px;top:295px" width="16" height="12" viewBox="0 0 16 12"><path d="M0.5 1.5H5L6.5 3H14.5V11.5H0.5Z" fill="#f0cc60" stroke="#b09040"/><rect x="0.5" y="3.5" width="14" height="8" fill="url(#fg)" stroke="#b09040"/></svg>
<div class="t" style="left:34.4px;top:295px;color:#000;font-size:12px;line-height:12px;">墙</div>
<div class="r" style="left:-3px;top:313px;width:9px;height:9px;background:linear-gradient(#fff,#d8d8d0);border:1px solid #8a8a80;box-sizing:border-box;"></div>
<div class="r" style="left:-1px;top:317px;width:5px;height:1px;background:#000;"></div>
<div class="r" style="left:1px;top:315px;width:1px;height:5px;background:#000;"></div>
<svg style="left:6px;top:317px" width="7" height="1"><line x1="0" y1="0.5" x2="7" y2="0.5" stroke="#a0a0a0" stroke-dasharray="1 1"/></svg>
<svg style="left:13px;top:311px" width="16" height="12" viewBox="0 0 16 12"><path d="M0.5 1.5H5L6.5 3H14.5V11.5H0.5Z" fill="#f0cc60" stroke="#b09040"/><rect x="0.5" y="3.5" width="14" height="8" fill="url(#fg)" stroke="#b09040"/></svg>
<div class="t" style="left:34.4px;top:311px;color:#000;font-size:12px;line-height:12px;">门窗洞</div>
<div class="r" style="left:-3px;top:329px;width:9px;height:9px;background:linear-gradient(#fff,#d8d8d0);border:1px solid #8a8a80;box-sizing:border-box;"></div>
<div class="r" style="left:-1px;top:333px;width:5px;height:1px;background:#000;"></div>
<div class="r" style="left:1px;top:331px;width:1px;height:5px;background:#000;"></div>
<svg style="left:6px;top:333px" width="7" height="1"><line x1="0" y1="0.5" x2="7" y2="0.5" stroke="#a0a0a0" stroke-dasharray="1 1"/></svg>
<svg style="left:13px;top:327px" width="16" height="12" viewBox="0 0 16 12"><path d="M0.5 1.5H5L6.5 3H14.5V11.5H0.5Z" fill="#f0cc60" stroke="#b09040"/><rect x="0.5" y="3.5" width="14" height="8" fill="url(#fg)" stroke="#b09040"/></svg>
<div class="t" style="left:34.4px;top:327px;color:#000;font-size:12px;line-height:12px;">梁</div>
<div class="r" style="left:-3px;top:345px;width:9px;height:9px;background:linear-gradient(#fff,#d8d8d0);border:1px solid #8a8a80;box-sizing:border-box;"></div>
<div class="r" style="left:-1px;top:349px;width:5px;height:1px;background:#000;"></div>
<div class="r" style="left:1px;top:347px;width:1px;height:5px;background:#000;"></div>
<svg style="left:6px;top:349px" width="7" height="1"><line x1="0" y1="0.5" x2="7" y2="0.5" stroke="#a0a0a0" stroke-dasharray="1 1"/></svg>
<svg style="left:13px;top:343px" width="16" height="12" viewBox="0 0 16 12"><path d="M0.5 1.5H5L6.5 3H14.5V11.5H0.5Z" fill="#f0cc60" stroke="#b09040"/><rect x="0.5" y="3.5" width="14" height="8" fill="url(#fg)" stroke="#b09040"/></svg>
<div class="t" style="left:34.4px;top:343px;color:#000;font-size:12px;line-height:12px;">板</div>
<div class="r" style="left:-3px;top:361px;width:9px;height:9px;background:linear-gradient(#fff,#d8d8d0);border:1px solid #8a8a80;box-sizing:border-box;"></div>
<div class="r" style="left:-1px;top:365px;width:5px;height:1px;background:#000;"></div>
<div class="r" style="left:1px;top:363px;width:1px;height:5px;background:#000;"></div>
<svg style="left:6px;top:365px" width="7" height="1"><line x1="0" y1="0.5" x2="7" y2="0.5" stroke="#a0a0a0" stroke-dasharray="1 1"/></svg>
<svg style="left:13px;top:359px" width="16" height="12" viewBox="0 0 16 12"><path d="M0.5 1.5H5L6.5 3H14.5V11.5H0.5Z" fill="#f0cc60" stroke="#b09040"/><rect x="0.5" y="3.5" width="14" height="8" fill="url(#fg)" stroke="#b09040"/></svg>
<div class="t" style="left:34.4px;top:359px;color:#000;font-size:12px;line-height:12px;">空心楼盖</div>
<div class="r" style="left:-3px;top:377px;width:9px;height:9px;background:linear-gradient(#fff,#d8d8d0);border:1px solid #8a8a80;box-sizing:border-box;"></div>
<div class="r" style="left:-1px;top:381px;width:5px;height:1px;background:#000;"></div>
<svg style="left:6px;top:381px" width="7" height="1"><line x1="0" y1="0.5" x2="7" y2="0.5" stroke="#a0a0a0" stroke-dasharray="1 1"/></svg>
<svg style="left:13px;top:375px" width="17" height="12" viewBox="0 0 17 12"><path d="M0.5 1.5H5L6.5 3H14.5V11.5H0.5Z" fill="#f4e4a8" stroke="#a08840"/><path d="M3 5.5H16.5L14 11.5H0.5Z" fill="url(#fo)" stroke="#a08030" stroke-width="0.8"/></svg>
<div class="t" style="left:34.4px;top:375px;color:#000;font-size:12px;line-height:12px;">基础</div>
<svg style="left:21px;top:387px" width="1" height="186"><line x1="0.5" y1="0" x2="0.5" y2="186" stroke="#a0a0a0" stroke-dasharray="1 1"/></svg>
<div class="r" style="left:51px;top:501px;width:69px;height:16px;background:#ebe9e0;"></div>
<svg style="left:21px;top:397px" width="11" height="1"><line x1="0" y1="0.5" x2="11" y2="0.5" stroke="#a0a0a0" stroke-dasharray="1 1"/></svg>
<svg style="left:32px;top:390px" width="16" height="16" viewBox="0 0 16 16"><path d="M1.5 13.5V10.5L4 9H6V13.5Z M9 13.5V9H12L14.5 10.5V13.5Z" fill="#fff" stroke="#1a3a8a"/><path d="M6 5L10.5 0.5H15V9L12 13H9V5Z" fill="#3a6ac8" stroke="#1a3a8a"/><rect x="6" y="5" width="3.2" height="8.5" fill="#c8e0f8" stroke="#1a3a8a"/></svg>
<div class="t" style="left:52.7px;top:391px;color:#000;font-size:12px;line-height:12px;">基础梁</div>
<div class="t p" style="left:91.2px;top:392px;font-size:10px;line-height:10px;letter-spacing:0.8px;">(F)</div>
<svg style="left:21px;top:413px" width="11" height="1"><line x1="0" y1="0.5" x2="11" y2="0.5" stroke="#a0a0a0" stroke-dasharray="1 1"/></svg>
<svg style="left:32px;top:406px" width="16" height="16" viewBox="0 0 16 16"><rect x="1" y="0.5" width="13.5" height="13.5" fill="#1e4a9a"/><rect x="3" y="2.5" width="9.5" height="9.5" fill="none" stroke="#e0ecfc" stroke-width="1.4"/><rect x="5.5" y="5" width="4.5" height="4.5" fill="#fff"/><path d="M1 7.2H3M12.5 7.2H14.5M7.7 0.5V2.5M7.7 12V14" stroke="#e0ecfc" stroke-width="1.2"/></svg>
<div class="t" style="left:52.7px;top:407px;color:#000;font-size:12px;line-height:12px;">筏板基础</div>
<div class="t p" style="left:103.2px;top:408px;font-size:10px;line-height:10px;letter-spacing:0.8px;">(M)</div>
<svg style="left:21px;top:429px" width="11" height="1"><line x1="0" y1="0.5" x2="11" y2="0.5" stroke="#a0a0a0" stroke-dasharray="1 1"/></svg>
<svg style="left:32px;top:422px" width="16" height="16" viewBox="0 0 16 16"><path d="M1 2.5H4V6.5H11V2.5H14" stroke="#2a4a9a" fill="none" stroke-width="1.3"/><path d="M1 8.5H14L11 13.5H4Z" fill="#c8d8f8" stroke="#2a4a9a"/><circle cx="5" cy="10.5" r="0.6" fill="#2a4a9a"/><circle cx="8" cy="11.5" r="0.6" fill="#2a4a9a"/><circle cx="10.5" cy="10" r="0.6" fill="#2a4a9a"/></svg>
<div class="t" style="left:52.7px;top:423px;color:#000;font-size:12px;line-height:12px;">集水坑</div>
<div class="t p" style="left:91.2px;top:424px;font-size:10px;line-height:10px;letter-spacing:0.8px;">(K)</div>
<svg style="left:21px;top:445px" width="11" height="1"><line x1="0" y1="0.5" x2="11" y2="0.5" stroke="#a0a0a0" stroke-dasharray="1 1"/></svg>
<svg style="left:32px;top:438px" width="16" height="16" viewBox="0 0 16 16"><rect x="5.5" y="1.5" width="4" height="3.5" fill="#fff" stroke="#2a3a9a"/><path d="M3 8.5L5 5H10L12 8.5Z" fill="#5a7ad8" stroke="#2a3a9a"/><rect x="1.5" y="9" width="13" height="3.5" fill="#e0e0dc" stroke="#606060"/></svg>
<div class="t" style="left:52.7px;top:439px;color:#000;font-size:12px;line-height:12px;">柱墩</div>
<div class="t p" style="left:79.2px;top:440px;font-size:10px;line-height:10px;letter-spacing:0.8px;">(Y)</div>
<svg style="left:21px;top:461px" width="11" height="1"><line x1="0" y1="0.5" x2="11" y2="0.5" stroke="#a0a0a0" stroke-dasharray="1 1"/></svg>
<svg style="left:32px;top:454px" width="16" height="16" viewBox="0 0 16 16"><rect x="1.5" y="0.5" width="13" height="13" fill="#dce8fa" stroke="#2a4aa0"/><path d="M8 3V11.5M4.5 6.5H11.5M4.5 6.5V9.5M11.5 6.5V9.5M6 11H10" stroke="#1a2a7a" stroke-width="1.2" fill="none"/></svg>
<div class="t" style="left:52.7px;top:455px;color:#000;font-size:12px;line-height:12px;">筏板主筋</div>
<div class="t p" style="left:103.2px;top:456px;font-size:10px;line-height:10px;letter-spacing:0.8px;">(R)</div>
<svg style="left:21px;top:477px" width="11" height="1"><line x1="0" y1="0.5" x2="11" y2="0.5" stroke="#a0a0a0" stroke-dasharray="1 1"/></svg>
<svg style="left:32px;top:470px" width="16" height="16" viewBox="0 0 16 16"><rect x="1.5" y="0.5" width="13" height="13" fill="#dce8fa" stroke="#2a4aa0"/><path d="M8 1V13M3 5H13M3 9H13M3 5V7M13 5V7M3 9V11M13 9V11" stroke="#1a2a7a" stroke-width="1.2" fill="none"/></svg>
<div class="t" style="left:52.7px;top:471px;color:#000;font-size:12px;line-height:12px;">筏板负筋</div>
<div class="t p" style="left:103.2px;top:472px;font-size:10px;line-height:10px;letter-spacing:0.8px;">(X)</div>
<svg style="left:21px;top:493px" width="11" height="1"><line x1="0" y1="0.5" x2="11" y2="0.5" stroke="#a0a0a0" stroke-dasharray="1 1"/></svg>
<svg style="left:32px;top:486px" width="16" height="16" viewBox="0 0 16 16"><path d="M1 7.5L8 4.5L15 7.5V10.5L8 13.5L1 10.5Z" fill="#a8c8f0" stroke="#1a3a8a"/><path d="M1 7.5L8 10.5L15 7.5M8 10.5V13.5" stroke="#1a3a8a" fill="none"/><path d="M4.5 6V1.5L7 0.5L10.5 1.5V6.5L7 8Z" fill="#5a80d0" stroke="#1a3a8a"/></svg>
<div class="t" style="left:52.7px;top:487px;color:#000;font-size:12px;line-height:12px;">独立基础</div>
<div class="t p" style="left:103.2px;top:488px;font-size:10px;line-height:10px;letter-spacing:0.8px;">(P)</div>
<svg style="left:21px;top:509px" width="11" height="1"><line x1="0" y1="0.5" x2="11" y2="0.5" stroke="#a0a0a0" stroke-dasharray="1 1"/></svg>
<svg style="left:32px;top:502px" width="16" height="16" viewBox="0 0 16 16"><path d="M1.5 14V11H3.5V8.5H5.5L9 2.5H14V11H13V14Z" fill="#fff" stroke="#1a3a8a"/><path d="M9.5 10.5L14.5 5.5V0.5L10 4.5Z" fill="#4a70c8" stroke="#1a3a8a"/></svg>
<div class="t" style="left:52.7px;top:503px;color:#000;font-size:12px;line-height:12px;">条形基础</div>
<div class="t p" style="left:103.2px;top:504px;font-size:10px;line-height:10px;letter-spacing:0.8px;">(T)</div>
<svg style="left:21px;top:525px" width="11" height="1"><line x1="0" y1="0.5" x2="11" y2="0.5" stroke="#a0a0a0" stroke-dasharray="1 1"/></svg>
<svg style="left:32px;top:518px" width="16" height="16" viewBox="0 0 16 16"><path d="M1.5 3.5L3 1.5H15V5L13.5 6.5H1.5Z" fill="#c8e0f8" stroke="#1a3a8a"/><path d="M6 6.5V12L7.5 13.5L9 12V6.5" fill="#5a80d0" stroke="#1a3a8a"/></svg>
<div class="t" style="left:52.7px;top:519px;color:#000;font-size:12px;line-height:12px;">桩承台</div>
<div class="t p" style="left:91.2px;top:520px;font-size:10px;line-height:10px;letter-spacing:0.8px;">(V)</div>
<svg style="left:21px;top:541px" width="11" height="1"><line x1="0" y1="0.5" x2="11" y2="0.5" stroke="#a0a0a0" stroke-dasharray="1 1"/></svg>
<svg style="left:32px;top:534px" width="16" height="16" viewBox="0 0 16 16"><path d="M1.5 13.5V10.5L4 9H6V13.5Z M9 13.5V9H12L14.5 10.5V13.5Z" fill="#fff" stroke="#1a3a8a"/><path d="M6 5L10.5 0.5H15V9L12 13H9V5Z" fill="#3a6ac8" stroke="#1a3a8a"/><rect x="6" y="5" width="3.2" height="8.5" fill="#c8e0f8" stroke="#1a3a8a"/></svg>
<div class="t" style="left:52.7px;top:535px;color:#000;font-size:12px;line-height:12px;">承台梁</div>
<div class="t p" style="left:91.2px;top:536px;font-size:10px;line-height:10px;letter-spacing:0.8px;">(F)</div>
<svg style="left:21px;top:557px" width="11" height="1"><line x1="0" y1="0.5" x2="11" y2="0.5" stroke="#a0a0a0" stroke-dasharray="1 1"/></svg>
<svg style="left:32px;top:550px" width="16" height="16" viewBox="0 0 16 16"><path d="M6 1.5H9.5V6H12V7.5L9.5 9V11L7.75 13.5L6 11V9L3.5 7.5V6H6Z" fill="#d8e8fa" stroke="#1a3a8a"/></svg>
<div class="t" style="left:52.7px;top:551px;color:#000;font-size:12px;line-height:12px;">桩</div>
<div class="t p" style="left:67.2px;top:552px;font-size:10px;line-height:10px;letter-spacing:0.8px;">(U)</div>
<svg style="left:21px;top:573px" width="11" height="1"><line x1="0" y1="0.5" x2="11" y2="0.5" stroke="#a0a0a0" stroke-dasharray="1 1"/></svg>
<svg style="left:32px;top:566px" width="16" height="16" viewBox="0 0 16 16"><path d="M1 2H15" stroke="#2a3a8a" stroke-width="1.5"/><rect x="1" y="9" width="14" height="4" fill="#c8d0f8"/><path d="M1 13H15" stroke="#1a2a7a" stroke-width="1.5"/><path d="M5 3V12M10 3V12" stroke="#2a3a8a" stroke-dasharray="1 1"/></svg>
<div class="t" style="left:52.7px;top:567px;color:#000;font-size:12px;line-height:12px;">基础板带</div>
<div class="t p" style="left:103.2px;top:568px;font-size:10px;line-height:10px;letter-spacing:0.8px;">(W)</div>
<div class="r" style="left:-3px;top:585px;width:9px;height:9px;background:linear-gradient(#fff,#d8d8d0);border:1px solid #8a8a80;box-sizing:border-box;"></div>
<div class="r" style="left:-1px;top:589px;width:5px;height:1px;background:#000;"></div>
<div class="r" style="left:1px;top:587px;width:1px;height:5px;background:#000;"></div>
<svg style="left:6px;top:589px" width="7" height="1"><line x1="0" y1="0.5" x2="7" y2="0.5" stroke="#a0a0a0" stroke-dasharray="1 1"/></svg>
<svg style="left:13px;top:583px" width="16" height="12" viewBox="0 0 16 12"><path d="M0.5 1.5H5L6.5 3H14.5V11.5H0.5Z" fill="#f0cc60" stroke="#b09040"/><rect x="0.5" y="3.5" width="14" height="8" fill="url(#fg)" stroke="#b09040"/></svg>
<div class="t" style="left:34.4px;top:583px;color:#000;font-size:12px;line-height:12px;">其它</div>
<div class="r" style="left:-3px;top:601px;width:9px;height:9px;background:linear-gradient(#fff,#d8d8d0);border:1px solid #8a8a80;box-sizing:border-box;"></div>
<div class="r" style="left:-1px;top:605px;width:5px;height:1px;background:#000;"></div>
<div class="r" style="left:1px;top:603px;width:1px;height:5px;background:#000;"></div>
<svg style="left:6px;top:605px" width="7" height="1"><line x1="0" y1="0.5" x2="7" y2="0.5" stroke="#a0a0a0" stroke-dasharray="1 1"/></svg>
<svg style="left:13px;top:599px" width="16" height="12" viewBox="0 0 16 12"><path d="M0.5 1.5H5L6.5 3H14.5V11.5H0.5Z" fill="#f0cc60" stroke="#b09040"/><rect x="0.5" y="3.5" width="14" height="8" fill="url(#fg)" stroke="#b09040"/></svg>
<div class="t" style="left:34.4px;top:599px;color:#000;font-size:12px;line-height:12px;">自定义</div>
<div class="r" style="left:-3px;top:617px;width:9px;height:9px;background:linear-gradient(#fff,#d8d8d0);border:1px solid #8a8a80;box-sizing:border-box;"></div>
<div class="r" style="left:-1px;top:621px;width:5px;height:1px;background:#000;"></div>
<div class="r" style="left:1px;top:619px;width:1px;height:5px;background:#000;"></div>
<svg style="left:6px;top:621px" width="7" height="1"><line x1="0" y1="0.5" x2="7" y2="0.5" stroke="#a0a0a0" stroke-dasharray="1 1"/></svg>
<svg style="left:13px;top:615px" width="16" height="12" viewBox="0 0 16 12"><path d="M0.5 1.5H5L6.5 3H14.5V11.5H0.5Z" fill="#f0cc60" stroke="#b09040"/><rect x="0.5" y="3.5" width="14" height="8" fill="url(#fg)" stroke="#b09040"/></svg>
<div class="t" style="left:34px;top:615px;color:#000;font-size:12px;line-height:12px;font-family:'Liberation Mono',monospace;font-size:11px;line-height:12px;letter-spacing:-1px;">CAD</div>
<div class="t" style="left:51px;top:615px;color:#000;font-size:12px;line-height:12px;">识别</div>
<svg style="left:81px;top:613px" width="15" height="15" viewBox="0 0 15 15"><rect x="0.5" y="0.5" width="14" height="14" fill="#e0ecf8" stroke="#4a6ab0"/><rect x="2.5" y="2.5" width="4" height="10" fill="#fff" stroke="#4a6ab0"/><rect x="8.5" y="2.5" width="4" height="10" fill="#fff" stroke="#4a6ab0"/></svg>
<div class="r" style="left:97px;top:613px;width:22px;height:9px;background:#f8f0a0;"></div>
<div class="t" style="left:97px;top:613px;color:#303010;font-size:12px;line-height:12px;font-size:9px;line-height:9px;letter-spacing:-0.3px;"><b>NEW</b></div>
<div class="r" style="left:198px;top:136px;width:815px;height:544px;background:#000;overflow:hidden">
<svg style="left:-198px;top:-136px" width="1013" height="680" viewBox="0 0 1013 680" shape-rendering="geometricPrecision">
<polygon points="932,135 1014,135 1014,148.7" fill="#687a3e" stroke="#687a3e" stroke-width="0.6"/>
<polygon points="522.7,135 932,135 1014,148.7 1014,212 " fill="#a1b55c" stroke="#a1b55c" stroke-width="0.6"/>
<polygon points="379,135 522.7,135 1014,212 1014,325 373.5,224" fill="#5f6d38" stroke="#5f6d38" stroke-width="0.6"/>
<line x1="197" y1="197" x2="450.9" y2="327.4" stroke="#e0141e" stroke-width="1"/>
<line x1="197" y1="322.5" x2="422.3" y2="358" stroke="#e0141e" stroke-width="1"/>
<line x1="197" y1="500.3" x2="557" y2="556.6" stroke="#e0141e" stroke-width="1"/>
<line x1="806.9" y1="294" x2="441.8" y2="680" stroke="#e0141e" stroke-width="1"/>
<line x1="846.2" y1="530" x2="1014" y2="614.3" stroke="#e0141e" stroke-width="1"/>
<line x1="507" y1="680" x2="1014" y2="581.3" stroke="#e0141e" stroke-width="1"/>
<line x1="604.5" y1="564" x2="1014" y2="628.8" stroke="#2f9038" stroke-width="1"/>
<line x1="931.5" y1="439.6" x2="1014" y2="452.8" stroke="#2f9038" stroke-width="1"/>
<line x1="835.9" y1="680" x2="1014" y2="491" stroke="#2f9038" stroke-width="1"/>
<line x1="866.8" y1="588.8" x2="934.4" y2="634.4" stroke="#2f9038" stroke-width="1"/>
<g fill="none" stroke="#e4e4e4" stroke-width="1.1"><line x1="855.8" y1="519.6" x2="864.2" y2="512"/><ellipse cx="865" cy="523.8" rx="3" ry="5.6" transform="rotate(43 865 523.8)"/><ellipse cx="870.3" cy="532.2" rx="3" ry="5.6" transform="rotate(43 870.3 532.2)"/></g>
<polygon points="334.6,453.2 480.2,299.2 600,288.8 755.3,298.8 935.4,373.3 790.6,524.7 611.8,451.8 518.8,437.6" fill="#007200" stroke="#007200" stroke-width="0.6"/>
<polygon points="334.6,453.2 530,436.7 530,551.5 330.3,519.5" fill="#004a00" stroke="#004a00" stroke-width="0.6"/>
<polygon points="611.8,451.8 790.6,524.7 788,590.6 604.5,564" fill="#004a00" stroke="#004a00" stroke-width="0.6"/>
<polygon points="790.6,524.7 935.4,373.3 931.5,439.6 788,590.6" fill="#005800" stroke="#005800" stroke-width="0.6"/>
<polygon points="525.3,347.6 671.2,193.5 761.7,208.5 616.2,361.9" fill="#4ce14c" stroke="#4ce14c" stroke-width="0.6"/>
<polygon points="616.2,361.9 761.7,208.5 755.3,298.8 611.8,451.8" fill="#3bab3b" stroke="#3bab3b" stroke-width="0.6"/>
<polygon points="525.3,347.6 616.2,361.9 604.5,564 511.3,549" fill="#2e8b30" stroke="#2e8b30" stroke-width="0.6"/>
<line x1="604.5" y1="564" x2="789" y2="593" stroke="#2f9038" stroke-width="1"/>
<polygon points="197,651.6 234.4,670.3 234.4,681 197,681" fill="#7a10e6" stroke="#7a10e6" stroke-width="0.6"/>
<polygon points="197,676 234.4,671 234.4,681 197,681" fill="#6a06c8" stroke="#6a06c8" stroke-width="0.6"/>
<polygon points="234.9,673.3 248.2,681 234.9,681" fill="#c4c4c4" stroke="#c4c4c4" stroke-width="0.6"/>
</svg></div>
<div class="r" style="left:457px;top:520px;width:71px;height:29px;background:#ffffe1;box-shadow:1px 1px 0 #8a8a7a;"></div>
<div class="t p" style="left:459.5px;top:522px;font-family:'Liberation Mono',monospace;font-size:11px;line-height:12px;letter-spacing:-0.6px;">TJ-4-1</div>
<div class="t" style="left:459.5px;top:535px;color:#000;font-size:12px;line-height:12px;">楼层</div>
<div class="t p" style="left:484.5px;top:535px;font-size:12px;line-height:12px;">:</div>
<div class="t" style="left:489px;top:535px;color:#000;font-size:12px;line-height:12px;">基础层</div>
<svg style="left:0;top:0" width="1013" height="680" viewBox="0 0 1013 680">
<line x1="357.4" y1="103" x2="446" y2="392" stroke="#e0141e" stroke-width="1.1"/>
<polygon points="447.6,399 442,387.5 449.8,385.8" fill="#ff1010"/>
<line x1="105" y1="395.3" x2="552" y2="416.8" stroke="#e0141e" stroke-width="1.1"/>
<polygon points="560,417.2 548.5,412.5 548.5,421.5" fill="#ff1010"/>
</svg>
</div></body></html>
